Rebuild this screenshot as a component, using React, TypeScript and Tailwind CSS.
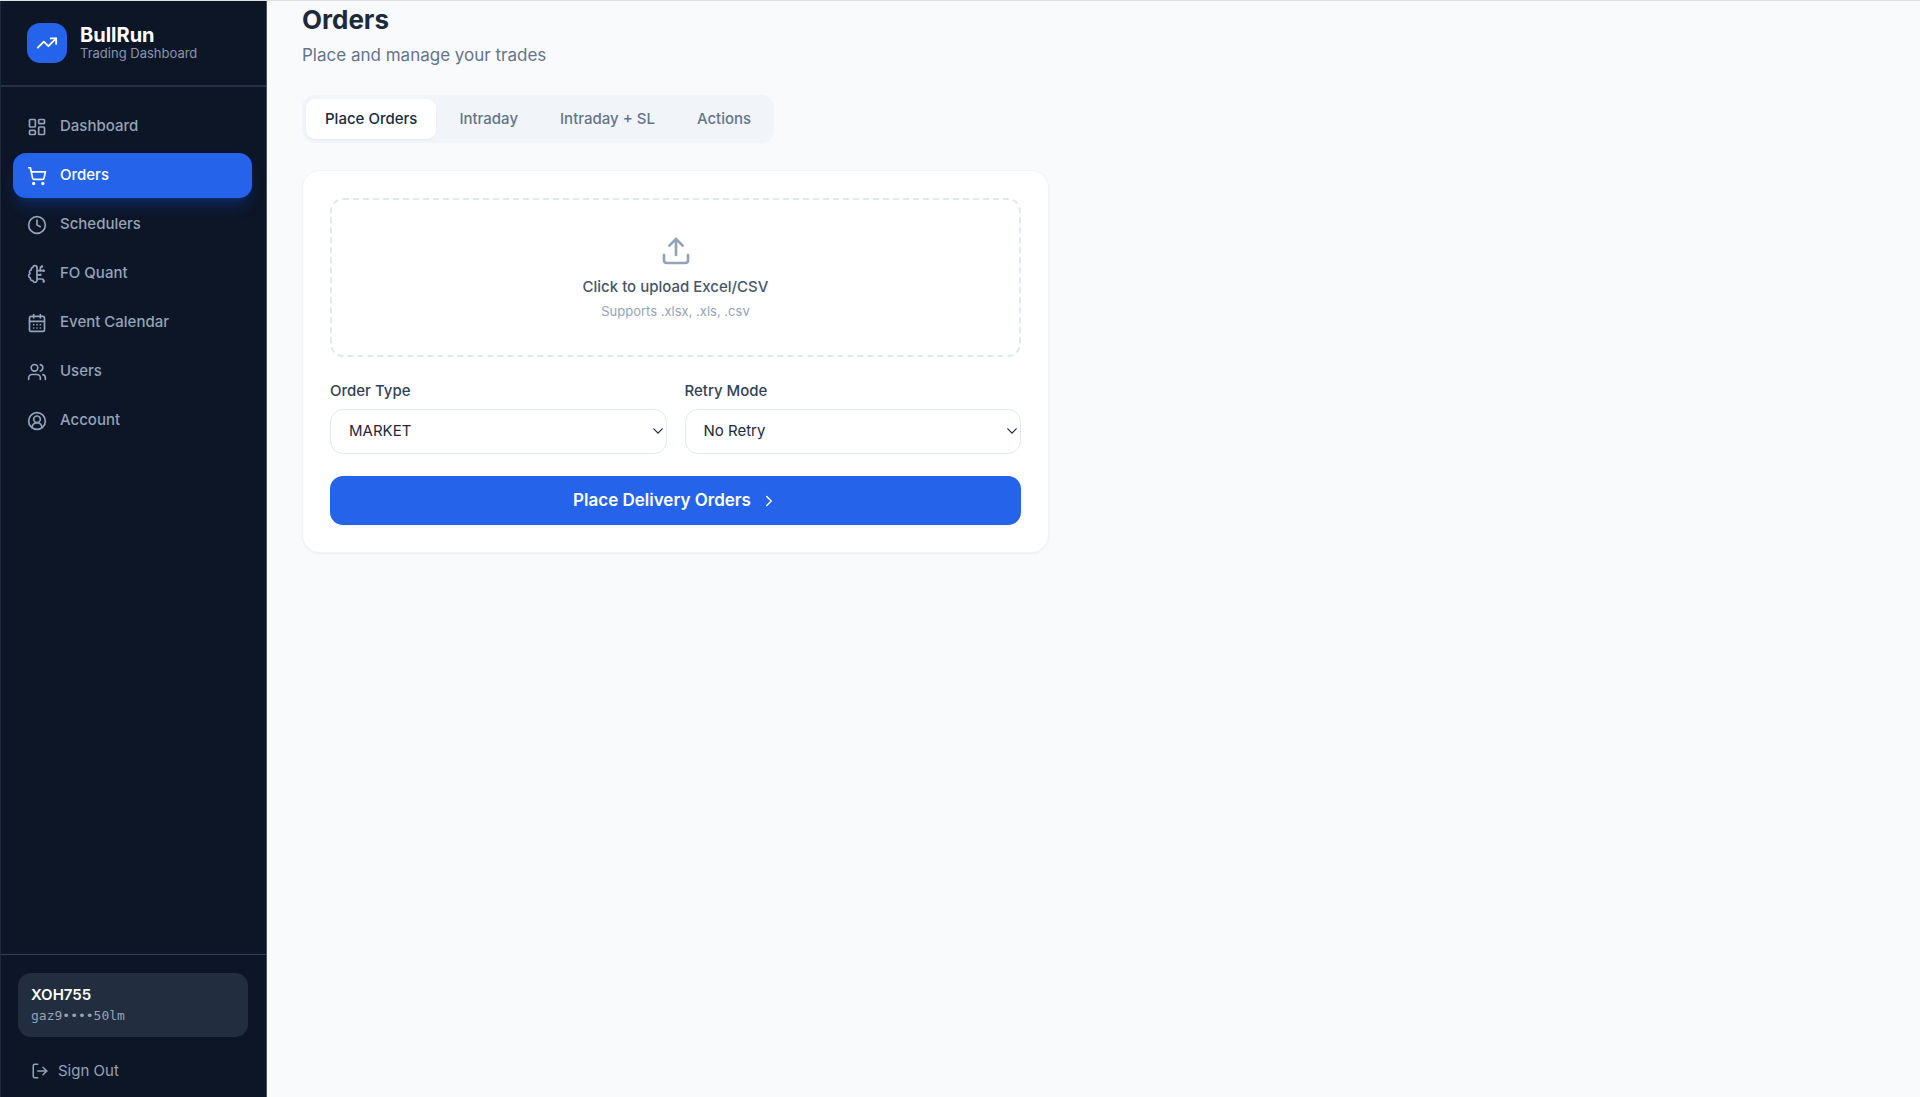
import React, { useState } from "react";
import {
  CalendarDays,
  ChevronRight,
  CircleUserRound,
  Clock,
  LayoutDashboard,
  LogOut,
  ShoppingCart,
  TrendingUp,
  Upload,
  Users,
} from "lucide-react";

// Half brain on the left, circuit traces on the right
const QuantIcon: React.FC = () => (
  <svg
    width="20"
    height="20"
    viewBox="0 0 24 24"
    fill="none"
    stroke="currentColor"
    strokeWidth="2"
    strokeLinecap="round"
    strokeLinejoin="round"
    aria-hidden="true"
  >
    <path d="M12 4.5a2.5 2.5 0 0 0-4.96-.46 2.5 2.5 0 0 0-1.98 3 2.5 2.5 0 0 0-1.32 4.24 3 3 0 0 0 .34 5.58 2.5 2.5 0 0 0 2.96 3.08 2.5 2.5 0 0 0 4.91.05L12 20V4.5Z" />
    <path d="M16 8V5c0-1.1.9-2 2-2" />
    <path d="M12 13h4" />
    <path d="M12 18h6a2 2 0 0 1 2 2v1" />
    <path d="M12 8h8" />
    <circle cx="20" cy="8" r="0.5" />
    <circle cx="16" cy="13" r="0.5" />
    <circle cx="20" cy="21" r="0.5" />
    <circle cx="18" cy="3" r="0.5" />
  </svg>
);

const navItems = [
  { label: "Dashboard", href: "#dashboard", icon: <LayoutDashboard size={20} /> },
  { label: "Orders", href: "#orders", icon: <ShoppingCart size={20} /> },
  { label: "Schedulers", href: "#schedulers", icon: <Clock size={20} /> },
  { label: "FO Quant", href: "#fo-quant", icon: <QuantIcon /> },
  { label: "Event Calendar", href: "#event-calendar", icon: <CalendarDays size={20} /> },
  { label: "Users", href: "#users", icon: <Users size={20} /> },
  { label: "Account", href: "#account", icon: <CircleUserRound size={20} /> },
];

const tabs = ["Place Orders", "Intraday", "Intraday + SL", "Actions"];

const Sidebar: React.FC = () => {
  return (
    <aside className="w-[267px] shrink-0 flex flex-col bg-[#0d1627] border-l border-l-[#1e293b] border-r border-r-[#475569]">
      {/* Logo */}
      <div className="flex items-center gap-[13px] pl-[26px] pr-4 pt-[22px] pb-[22px] border-b-2 border-[#243044]">
        <div className="w-10 h-10 rounded-[13px] bg-[#2563eb] flex items-center justify-center">
          <TrendingUp size={22} className="text-white" />
        </div>
        <div>
          <p className="text-[20px] leading-5 font-bold text-white">BullRun</p>
          <p className="text-[13px] leading-4 text-[#8795ab]">
            Trading Dashboard
          </p>
        </div>
      </div>

      {/* Navigation */}
      <nav className="flex-1 flex flex-col gap-1 pl-3 pr-[14px] pt-[17px]">
        {navItems.map(({ label, href, icon }) => (
          <a
            key={label}
            href={href}
            className={
              label === "Orders"
                ? "flex items-center gap-[13px] h-[45px] px-3.5 rounded-[13px] text-[15px] font-medium bg-[#2563eb] text-white shadow-lg shadow-blue-600/25"
                : "flex items-center gap-[13px] h-[45px] px-3.5 rounded-[13px] text-[15px] font-medium text-[#94a3b8]"
            }
          >
            {icon}
            {label}
          </a>
        ))}
      </nav>

      {/* Account */}
      <div className="border-t border-[#334155] pt-[18px] pb-1 pl-[17px] pr-[18px]">
        <div className="rounded-[13px] bg-[#222d40] px-[13px] py-[11px]">
          <p className="text-[15px] leading-[22px] font-semibold text-white">
            XOH755
          </p>
          <p className="font-['DejaVu_Sans_Mono',monospace] text-[13px] leading-5 text-[#94a3b8]">
            gaz9••••50lm
          </p>
        </div>
        <button
          type="button"
          className="mt-3 h-11 px-[13px] flex items-center gap-[9px] text-[15px] text-[#94a3b8]"
        >
          <LogOut size={18} />
          Sign Out
        </button>
      </div>
    </aside>
  );
};

const SelectField: React.FC<{
  id: string;
  label: string;
  options: string[];
}> = ({ id, label, options }) => {
  return (
    <div className="flex-1">
      <label
        htmlFor={id}
        className="block mb-2 text-[15px] leading-5 font-medium text-[#334155]"
      >
        {label}
      </label>
      <div className="relative">
        <select
          id={id}
          className="appearance-none block w-full h-[45px] px-[18px] rounded-[13px] border border-[#e2e8f0] bg-white text-[15px] text-[#1e293b]"
        >
          {options.map((option) => (
            <option key={option}>{option}</option>
          ))}
        </select>
        <svg
          viewBox="0 0 10 6"
          fill="none"
          stroke="#1e293b"
          strokeWidth="1.2"
          strokeLinecap="round"
          strokeLinejoin="round"
          className="absolute right-1 top-[19px] w-2.5 h-1.5 pointer-events-none"
          aria-hidden="true"
        >
          <path d="M0.8 0.8 5 5.2 9.2 0.8" />
        </svg>
      </div>
    </div>
  );
};

export default function App() {
  const [activeTab, setActiveTab] = useState("Place Orders");

  return (
    <div className="min-h-screen flex border-t border-[#dfe1df] bg-[#f9fafc] font-[Inter,sans-serif]">
      <Sidebar />

      <main className="flex-1 pl-[35px] pr-9 pt-[3px]">
        <h1 className="text-[26px] leading-8 font-bold text-[#1e293b]">
          Orders
        </h1>
        <p className="mt-[7px] text-[17px] leading-6 text-[#64748b]">
          Place and manage your trades
        </p>

        {/* Tabs */}
        <div className="mt-7 w-fit flex gap-1 p-1 rounded-[13px] bg-[#f1f5f9]">
          {tabs.map((tab) => (
            <button
              key={tab}
              type="button"
              onClick={() => setActiveTab(tab)}
              className={
                tab === activeTab
                  ? "h-10 px-[19px] rounded-[9px] text-[15px] font-medium bg-white text-[#1e293b] shadow-xs"
                  : "h-10 px-[19px] rounded-[9px] text-[15px] font-medium text-[#64748b]"
              }
            >
              {tab}
            </button>
          ))}
        </div>

        {/* Order form */}
        <form className="mt-[27px] max-w-[747px] p-[27px] rounded-[18px] border border-[#f1f5f9] bg-white shadow-xs">
          <button
            type="button"
            className="w-full h-[159px] flex flex-col items-center justify-center rounded-[13px] border-2 border-dashed border-[#e2e8f0]"
          >
            <Upload size={32} className="text-[#94a3b8]" />
            <span className="mt-2 text-[15px] leading-6 font-medium text-[#475569]">
              Click to upload Excel/CSV
            </span>
            <span className="mt-0.5 text-[13px] leading-5 text-[#94a3b8]">
              Supports .xlsx, .xls, .csv
            </span>
          </button>

          <div className="mt-6 flex gap-[18px]">
            <SelectField
              id="order-type"
              label="Order Type"
              options={["MARKET", "LIMIT"]}
            />
            <SelectField
              id="retry-mode"
              label="Retry Mode"
              options={["No Retry", "Retry"]}
            />
          </div>

          <button
            type="button"
            className="mt-[22px] w-full h-[49px] flex items-center justify-center gap-[9px] rounded-[13px] bg-[#2563eb] text-[17px] font-semibold text-white"
          >
            Place Delivery Orders
            <ChevronRight size={18} />
          </button>
        </form>
      </main>
    </div>
  );
}
